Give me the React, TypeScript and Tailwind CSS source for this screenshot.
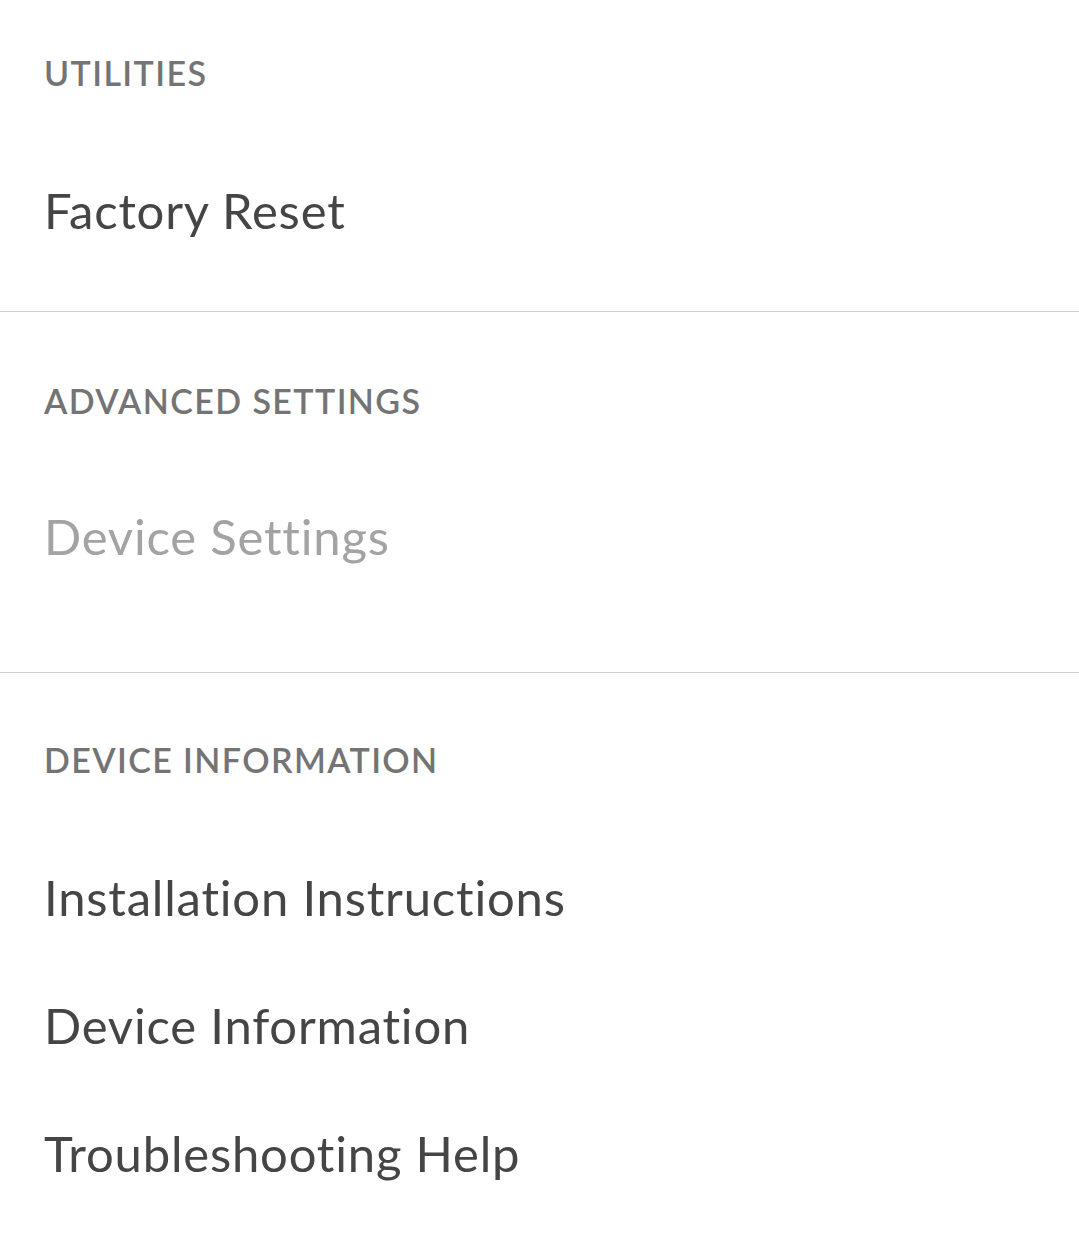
import React from "react";

const font = { fontFamily: "Lato, 'Open Sans', sans-serif" };

export default function App() {
  return (
    <div
      className="w-[1079px] h-[1235px] bg-white overflow-hidden [font-variant-ligatures:none]"
      style={font}
    >
      <section className="pl-[44px] pt-[56px] pb-[76px]">
        <h2 className="text-[34px] leading-none font-semibold text-[#747474] tracking-[1.4px]">UTILITIES</h2>
        <div className="mt-[96px] text-[49px] leading-none text-[#454545] tracking-[0.8px]">Factory Reset</div>
      </section>
      <div className="h-px bg-[#cfcfcf]" />
      <section className="pl-[44px] pt-[72px] pb-[111px]">
        <h2 className="text-[34px] leading-none font-semibold text-[#747474] tracking-[1.4px]">ADVANCED SETTINGS</h2>
        <div className="mt-[94px] text-[49px] leading-none text-[#a3a3a3] tracking-[0.8px]">Device Settings</div>
      </section>
      <div className="h-px bg-[#cfcfcf]" />
      <section className="pl-[44px] pt-[70px]">
        <h2 className="text-[34px] leading-none font-semibold text-[#747474] tracking-[1.4px]">DEVICE INFORMATION</h2>
        <div className="mt-[96px] flex flex-col gap-[79px] text-[49px] leading-none text-[#454545] tracking-[0.8px]">
          <div>Installation Instructions</div>
          <div>Device Information</div>
          <div>Troubleshooting Help</div>
        </div>
      </section>
    </div>
  );
}
